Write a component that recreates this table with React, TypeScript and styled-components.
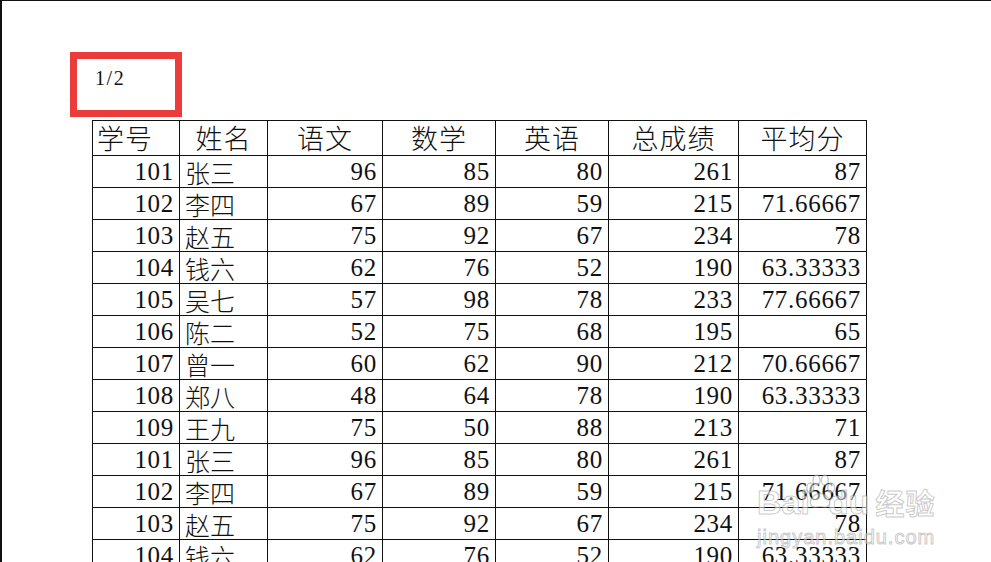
import React from "react";
import styled, { createGlobalStyle } from "styled-components";

const Global = createGlobalStyle`
  html, body { margin: 0; padding: 0; background: #fff; }
  body { width: 991px; height: 562px; overflow: hidden; }
`;

const Page = styled.div`
  position: relative;
  box-sizing: border-box;
  width: 991px;
  height: 562px;
  overflow: hidden;
  background: #fff;
  border-top: 1px solid #111;
  border-left: 2px solid #111;
  padding: 51px 0 0 68px;
  font-family: "Liberation Serif", "Noto Sans CJK SC", serif;
  color: #111;
`;

const PageMark = styled.div`
  box-sizing: border-box;
  width: 112px;
  height: 65px;
  border: 7px solid #ec3b3b;
  padding: 8px 0 0 18px;
  font-family: "Liberation Serif", serif;
  font-size: 20px;
  letter-spacing: 1.6px;
  line-height: 22px;
`;

const Sheet = styled.table`
  margin: 3px 0 0 22px;
  border-collapse: collapse;
  table-layout: fixed;
  width: 774px;
`;

const HeadCell = styled.th<{ $left?: boolean }>`
  height: 34px;
  padding: ${(p) => (p.$left ? "0 0 0 4px" : "0")};
  border: 1px solid #111;
  text-align: ${(p) => (p.$left ? "left" : "center")};
  font-family: "Noto Sans CJK SC", sans-serif;
  font-weight: 300;
  font-size: 27px;
  line-height: 32px;
  letter-spacing: 1px;
  white-space: nowrap;
`;

const Cell = styled.td<{ $name?: boolean }>`
  height: 31px;
  padding: ${(p) => (p.$name ? "0 0 0 5px" : "0 5px 0 0")};
  border: 1px solid #111;
  text-align: ${(p) => (p.$name ? "left" : "right")};
  font-family: ${(p) =>
    p.$name ? `"Noto Sans CJK SC", sans-serif` : `"Liberation Serif", serif`};
  font-weight: ${(p) => (p.$name ? 300 : 400)};
  font-size: 25px;
  letter-spacing: ${(p) => (p.$name ? "0" : "0.7px")};
  line-height: 30px;
  white-space: nowrap;
`;

const Watermark = styled.div`
  position: absolute;
  left: 755px;
  top: 471px;
  width: 200px;
  display: flex;
  flex-direction: column;
  pointer-events: none;
  white-space: nowrap;
  font-family: "Liberation Sans", "Noto Sans CJK SC", sans-serif;
  color: rgba(255, 255, 255, 0.5);
  -webkit-text-stroke: 1px rgba(150, 150, 150, 0.5);
`;

const MarkTop = styled.div`
  display: flex;
  align-items: flex-end;
  font-size: 34px;
  font-weight: 700;
  line-height: 36px;
`;

const MarkCn = styled.span`
  flex: none;
  margin-left: 6px;
  font-family: "Noto Sans CJK SC", sans-serif;
  font-size: 29px;
  font-weight: 700;
  line-height: 36px;
  letter-spacing: 1px;
`;

const MarkUrl = styled.div`
  font-size: 20px;
  line-height: 22px;
  margin-top: 6px;
  letter-spacing: 1px;
`;

const Paw = styled.svg`
  flex: none;
  margin: 0 -8px 8px -6px;
`;

const cols = [87, 88, 115, 113, 113, 130, 128];
const heads = ["学号", "姓名", "语文", "数学", "英语", "总成绩", "平均分"];

const rows: [string, string, string, string, string, string, string][] = [
  ["101", "张三", "96", "85", "80", "261", "87"],
  ["102", "李四", "67", "89", "59", "215", "71.66667"],
  ["103", "赵五", "75", "92", "67", "234", "78"],
  ["104", "钱六", "62", "76", "52", "190", "63.33333"],
  ["105", "吴七", "57", "98", "78", "233", "77.66667"],
  ["106", "陈二", "52", "75", "68", "195", "65"],
  ["107", "曾一", "60", "62", "90", "212", "70.66667"],
  ["108", "郑八", "48", "64", "78", "190", "63.33333"],
  ["109", "王九", "75", "50", "88", "213", "71"],
  ["101", "张三", "96", "85", "80", "261", "87"],
  ["102", "李四", "67", "89", "59", "215", "71.66667"],
  ["103", "赵五", "75", "92", "67", "234", "78"],
  ["104", "钱六", "62", "76", "52", "190", "63.33333"],
];

export default function App() {
  return (
    <>
      <Global />
      <Page>
        <PageMark>1/2</PageMark>
        <Sheet>
          <colgroup>
            {cols.map((w, i) => (
              <col key={i} style={{ width: w }} />
            ))}
          </colgroup>
          <thead>
            <tr>
              {heads.map((h, i) => (
                <HeadCell key={h} $left={i === 0}>
                  {h}
                </HeadCell>
              ))}
            </tr>
          </thead>
          <tbody>
            {rows.map((r, ri) => (
              <tr key={ri}>
                {r.map((v, ci) => (
                  <Cell key={ci} $name={ci === 1}>
                    {v}
                  </Cell>
                ))}
              </tr>
            ))}
          </tbody>
        </Sheet>
        <Watermark>
          <MarkTop>
            <span>Bai</span>
            <Paw width="32" height="40" viewBox="0 0 46 50">
              <g fill="rgba(255,255,255,0.5)" stroke="rgba(150,150,150,0.5)" strokeWidth="2">
                <ellipse cx="9" cy="19" rx="5" ry="7" />
                <ellipse cx="18" cy="8" rx="5" ry="7" />
                <ellipse cx="30" cy="8" rx="5" ry="7" />
                <ellipse cx="39" cy="19" rx="5" ry="7" />
                <path d="M10 44 C6 36 16 27 23 27 C30 27 40 36 36 44 C33 49 27 46 23 46 C19 46 13 49 10 44 Z" />
              </g>
            </Paw>
            <span>du</span>
            <MarkCn>经验</MarkCn>
          </MarkTop>
          <MarkUrl>jingyan.baidu.com</MarkUrl>
        </Watermark>
      </Page>
    </>
  );
}
